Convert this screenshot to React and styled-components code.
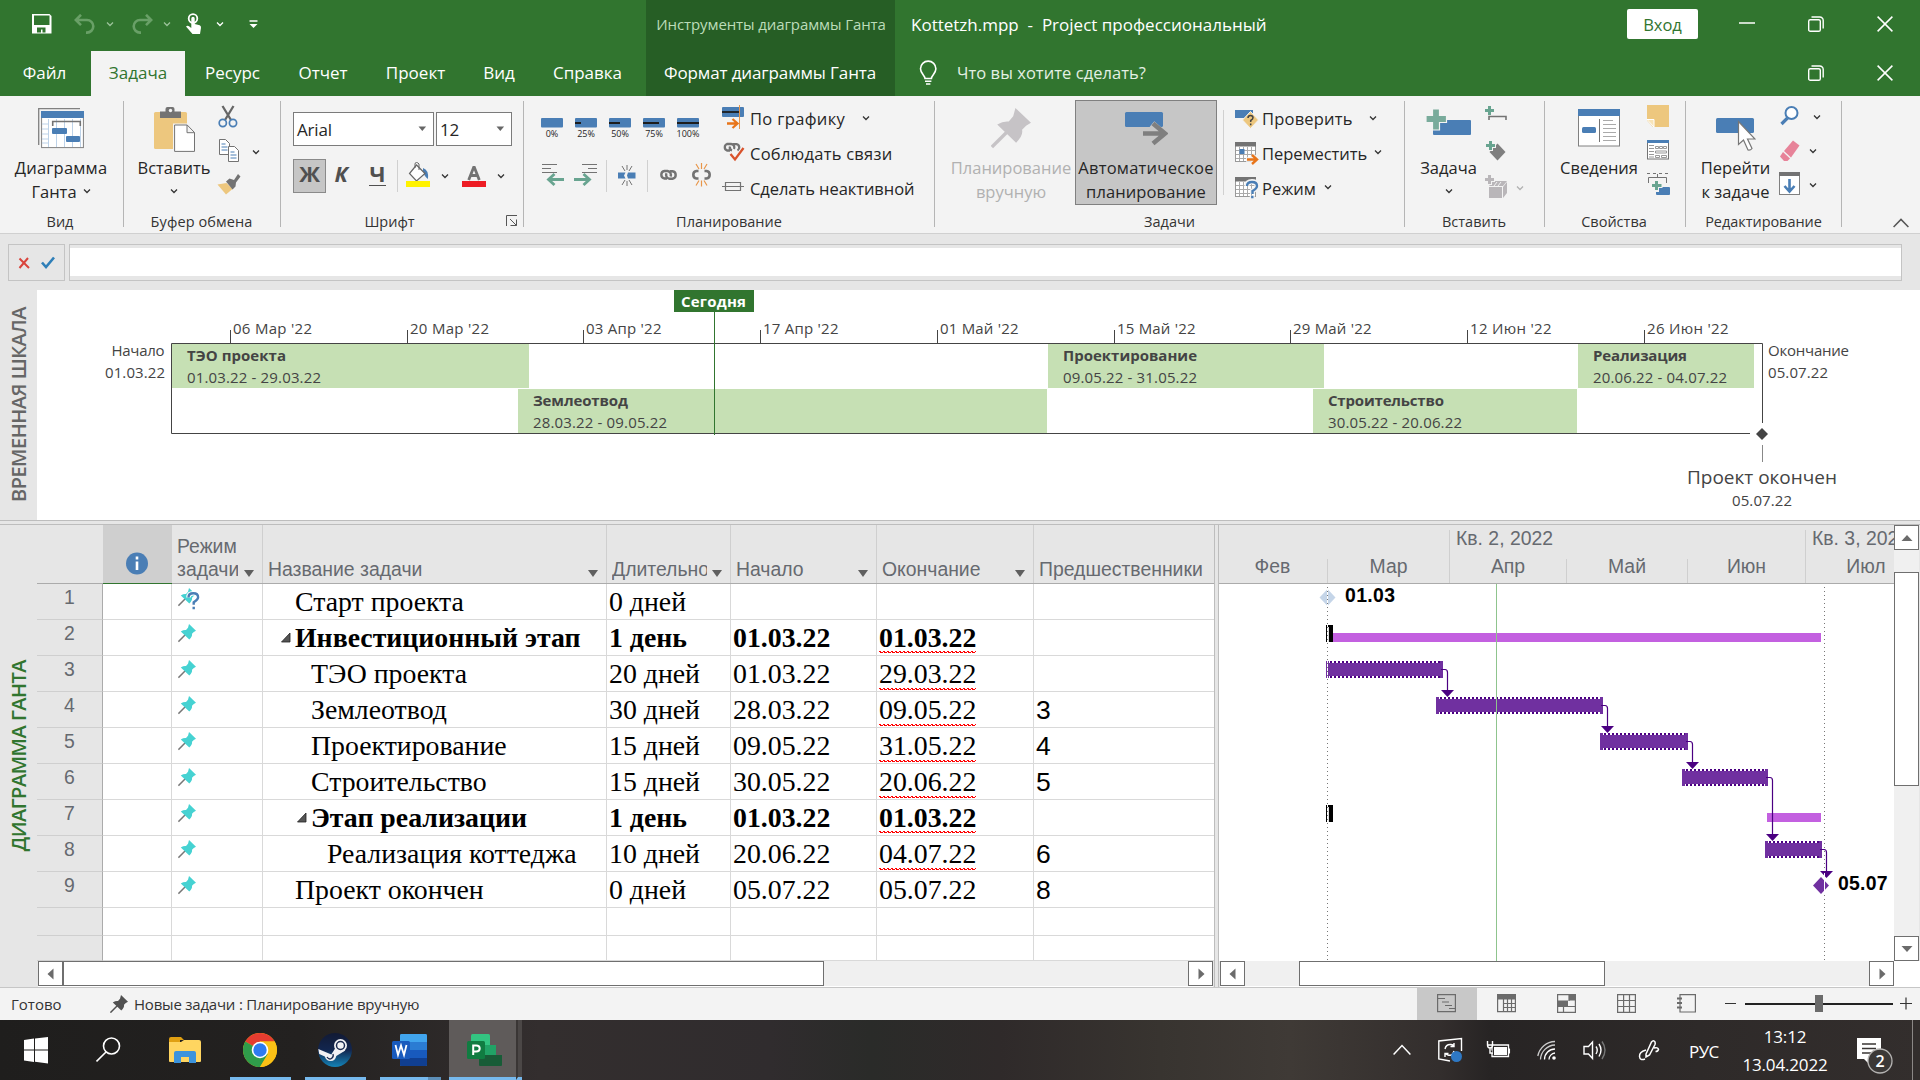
import React from "react";
import styled, { createGlobalStyle } from "styled-components";

const GREEN = "#31752f";
const BLUE = "#4a7eb5";
const GREY = "#737373";
const UI = `"Open Sans", "Noto Sans", sans-serif`;
const ARIAL = `"Liberation Sans", Arial, sans-serif`;
const TIMES = `"Liberation Serif", "Times New Roman", serif`;

const Global = createGlobalStyle`
  * { box-sizing: border-box; }
  body { margin: 0; background: #e6e6e6; font-family: ${UI}; overflow: hidden; }
`;

const Screen = styled.div`
  width: 1920px;
  height: 1080px;
  display: flex;
  flex-direction: column;
  color: #262626;
  font-family: ${UI};
  white-space: nowrap;
  overflow: hidden;
`;

const Drawing = styled.svg`
  display: block;
  flex: none;
`;

const Icon = ({ w, h, children, ...rest }) => (
  <Drawing width={w} height={h} viewBox={`0 0 ${w} ${h}`} fill="none" {...rest}>
    {children}
  </Drawing>
);

const Gap = styled.div`
  flex: none;
  width: ${(p) => p.$w || 0}px;
  height: ${(p) => p.$h || 0}px;
`;

const Chevron = ({ color = "#333", h = 35, y }) => (
  <Icon w={8} h={h}>
    <path d={`M1 ${(y ?? h / 2) - 1.5}l3 3l3-3`} stroke={color} strokeWidth="1.3" />
  </Icon>
);

/* ---------- title bar and tabs ---------- */

const Header = styled.header`
  flex: none;
  height: 96px;
  display: flex;
  background: ${GREEN};
  color: #fff;
`;
const HeaderPart = styled.div`
  flex: none;
  width: ${(p) => p.$w}px;
  background: ${(p) => (p.$dark ? "#265e25" : "transparent")};
  display: flex;
  flex-direction: column;
`;
const TitleRow = styled.div`
  height: 51px;
  display: flex;
  align-items: center;
  padding-left: ${(p) => p.$pad || 0}px;
  padding-bottom: 3px;
`;
const TabRow = styled.nav`
  height: 45px;
  display: flex;
  align-items: center;
  padding-left: ${(p) => p.$pad || 0}px;
  padding-bottom: ${(p) => p.$lift || 0}px;
`;
const Tab = styled.div`
  width: ${(p) => p.$w}px;
  height: 45px;
  line-height: 44px;
  text-align: center;
  font-size: 17px;
  letter-spacing: ${(p) => p.$ls || 0}px;
  background: ${(p) => (p.$active ? "#f3f3f3" : "transparent")};
  color: ${(p) => (p.$active ? GREEN : "#fff")};
`;
const FileTab = styled(Tab)`
  padding-right: 2px;
`;
const ContextTitle = styled.div`
  width: 100%;
  padding-left: 1px;
  text-align: center;
  font-size: 15px;
  letter-spacing: -0.1px;
  color: #bcdcb9;
`;
const WindowTitle = styled.div`
  font-size: 17px;
  white-space: pre;
  width: 716px;
`;
const SignIn = styled.button`
  width: 71px;
  height: 30px;
  border: 0;
  border-radius: 2px;
  padding: 0;
  background: #fff;
  color: ${GREEN};
  font: 16.5px ${UI};
`;
const Ask = styled.div`
  width: 851px;
  font-size: 16.5px;
  letter-spacing: 0.05px;
  color: #e4f0e3;
`;

const Restore = () => (
  <Icon w={16} h={16} stroke="#fff" strokeWidth="1.4">
    <rect x="0.7" y="3.7" width="11.6" height="11.6" rx="1.6" />
    <path d="M3.5 1h8.3a3.4 3.4 0 0 1 3.4 3.4v8" />
  </Icon>
);
const Close = () => (
  <Icon w={16} h={16} stroke="#fff" strokeWidth="1.5">
    <path d="M.6.6l14.8 14.8M15.4.6L.6 15.4" />
  </Icon>
);

const QuickAccess = () => (
  <>
    <Icon w={20} h={20}>
      <path d="M0 0h17.5l2 2v17.5H0z" fill="#fff" />
      <path d="M2 1.5h15.500v9.500H2z" fill={GREEN} />
      <path d="M5 13.500h8.500v5H10.500v-3h-1.500v3H5z" fill={GREEN} />
    </Icon>
    <Gap $w={22} />
    <Icon w={22} h={20} stroke="#69a067" strokeWidth="2.600">
      <path d="M7 .8L1.800 6L7 11.200M2 6h11a6.300 6.300 0 0 1 0 12.600h-1" />
    </Icon>
    <Gap $w={10} />
    <Chevron color="#9cc39a" h={12} />
    <Gap $w={17} />
    <Icon w={22} h={20} stroke="#69a067" strokeWidth="2.600">
      <path d="M15 .8L20.200 6L15 11.200M20 6H9a6.300 6.300 0 0 0 0 12.600h1" />
    </Icon>
    <Gap $w={10} />
    <Chevron color="#9cc39a" h={12} />
    <Gap $w={14} />
    <Icon w={17} h={22}>
      <circle cx="8" cy="5.500" r="4.300" stroke="#fff" strokeWidth="1.800" />
      <path d="M6.300 5.500a1.700 1.700 0 0 1 3.400 0v5.500l5 1.300q1.500.5 1.300 2.500L15 21H7.500L1 13.500q1.500-1.500 3-.3l2.300 1.700z" fill="#fff" />
    </Icon>
    <Gap $w={14} />
    <Chevron color="#fff" h={12} />
    <Gap $w={25} />
    <Icon w={9} h={9}>
      <path d="M.5 1h8" stroke="#fff" strokeWidth="1.500" />
      <path d="M.5 4h8l-4 4z" fill="#fff" />
    </Icon>
  </>
);

const Top = () => (
  <Header>
    <HeaderPart $w={646}>
      <TitleRow $pad={32}>
        <QuickAccess />
      </TitleRow>
      <TabRow>
        <FileTab $w={91}>Файл</FileTab>
        <Tab $w={94} $active>Задача</Tab>
        <Tab $w={95}>Ресурс</Tab>
        <Tab $w={86}>Отчет</Tab>
        <Tab $w={99}>Проект</Tab>
        <Tab $w={68}>Вид</Tab>
        <Tab $w={109}>Справка</Tab>
      </TabRow>
    </HeaderPart>
    <HeaderPart $w={249} $dark>
      <TitleRow>
        <ContextTitle>Инструменты диаграммы Ганта</ContextTitle>
      </TitleRow>
      <TabRow>
        <Tab $w={248} $ls={-0.12}>Формат диаграммы Ганта</Tab>
      </TabRow>
    </HeaderPart>
    <HeaderPart $w={1025}>
      <TitleRow $pad={16}>
        <WindowTitle>{"Kottetzh.mpp  -  Project профессиональный"}</WindowTitle>
        <SignIn>Вход</SignIn>
        <Gap $w={41} />
        <Icon w={16} h={4}>
          <path d="M0 1h16" stroke="#fff" strokeWidth="1.500" />
        </Icon>
        <Gap $w={53} />
        <Restore />
        <Gap $w={53} />
        <Close />
      </TitleRow>
      <TabRow $pad={24} $lift={2}>
        <Icon w={20} h={26} stroke="#fff" strokeWidth="1.600">
          <path d="M6 18.500c0-3-4.500-5-4.500-9.700a7.700 7.700 0 0 1 15.400 0c0 4.700-4.500 6.700-4.500 9.700zM6 21.300h6.400M7 24h4.400" />
        </Icon>
        <Gap $w={18} />
        <Ask>Что вы хотите сделать?</Ask>
        <Restore />
        <Gap $w={53} />
        <Close />
      </TabRow>
    </HeaderPart>
  </Header>
);

/* ---------- ribbon ---------- */

const RibbonBar = styled.section`
  flex: none;
  height: 138px;
  display: flex;
  padding-top: 5px;
  background: #f3f3f3;
  border-bottom: 1px solid #d0d0d0;
`;
const GroupBox = styled.div`
  flex: none;
  width: ${(p) => p.$w}px;
  height: 126px;
  border-right: 1px solid #b5b5b5;
`;
const GroupBody = styled.div`
  height: 112px;
  display: flex;
  align-items: flex-start;
  padding-left: ${(p) => p.$pad || 0}px;
`;
const GroupName = styled.div`
  display: flex;
  justify-content: center;
  align-items: center;
  height: 16px;
  padding-right: ${(p) => p.$shift || 0}px;
  font-size: 14.5px;
  letter-spacing: ${(p) => p.$ls || 0}px;
  color: #333;
`;
const Big = styled.div`
  flex: none;
  width: ${(p) => p.$w}px;
  height: 105px;
  margin-top: -1px;
  padding-top: ${(p) => (p.$on ? 0 : 1)}px;
  display: flex;
  flex-direction: column;
  align-items: center;
  background: ${(p) => (p.$on ? "#c6c6c6" : "transparent")};
  border: ${(p) => (p.$on ? "1px solid #808080" : "0")};
  color: ${(p) => (p.$off ? "#b1b1b1" : "#262626")};
`;
const BigLine = styled.div`
  height: 24px;
  line-height: 24px;
  display: flex;
  align-items: center;
  gap: 6px;
  font-size: 16.5px;
  letter-spacing: ${(p) => p.$ls || 0}px;
`;
const Column = styled.div`
  flex: none;
  display: flex;
  flex-direction: column;
`;
const Line = styled.div`
  height: 35px;
  display: flex;
  align-items: center;
  font-size: 16.5px;
  letter-spacing: ${(p) => p.$ls || 0}px;
`;
const Rule = styled.div`
  flex: none;
  width: 1px;
  height: ${(p) => p.$h}px;
  margin-top: ${(p) => p.$top || 0}px;
  background: #d0d0d0;
`;
const Combo = styled.div`
  width: ${(p) => p.$w}px;
  height: 34px;
  border: 1px solid #7b7b7b;
  background: #fff;
  display: flex;
  align-items: center;
  justify-content: space-between;
  padding: 0 6px 0 3px;
  font-size: 17px;
  letter-spacing: -0.2px;
`;
const Letter = styled.div`
  flex: none;
  width: 33px;
  height: 34px;
  line-height: 27px;
  padding-right: ${(p) => p.$shift || 0}px;
  text-align: center;
  font-size: 22px;
  font-weight: 700;
  font-style: ${(p) => (p.$italic ? "italic" : "normal")};
  color: #505050;
  background: ${(p) => (p.$on ? "#c6c6c6" : "transparent")};
  border: 1px solid ${(p) => (p.$on ? "#8a8a8a" : "transparent")};
`;
const Underlined = styled.span`
  display: inline-block;
  height: 26px;
  border-bottom: 1.5px solid #505050;
`;
const FontRow = styled.div`
  display: flex;
  align-items: flex-start;
  margin-top: ${(p) => p.$top}px;
`;
const PercentRow = styled.div`
  display: flex;
  gap: 8px;
  margin-top: 17px;
  height: 42px;
`;
const Percent = styled.div`
  width: 26px;
  display: flex;
  flex-direction: column;
  align-items: center;
  font-size: 9px;
  line-height: 11px;
`;

const Group = ({ w, pad, name, shift, ls, children }) => (
  <GroupBox $w={w}>
    <GroupBody $pad={pad}>{children}</GroupBody>
    <GroupName $shift={shift} $ls={ls}>{name}</GroupName>
  </GroupBox>
);

const PinShape = ({ color, needle = color }) => (
  <>
    <path d="M.4 17.600L8 10" stroke={needle} strokeWidth="1.500" />
    <path d="M11 0L18 6.700L15.800 8L14 9.800Q14.600 12.500 11.300 15.600L2.800 7.400Q5.500 5.800 8 6.100L10 3.700Z" fill={color} />
  </>
);

const Triangle = ({ color = "#666" }) => (
  <Icon w={9} h={6}>
    <path d="M.5 .5h7.600l-3.800 4.500z" fill={color} />
  </Icon>
);

const ViewGroup = () => (
  <Group w={124} name="Вид" shift={3}>
    <Big $w={122}>
      <Icon w={46} h={55}>
        <path d="M.7 44V7.700H42" stroke="#808080" strokeWidth="1.300" />
        <rect x="3.600" y="10.600" width="41.800" height="36" fill="#fff" stroke="#808080" />
        <rect x="3" y="10" width="43" height="7" fill={BLUE} />
        <path d="M10.500 18v28M18.500 18v28M26.500 18v28M34.500 18v28M42.500 18v28M4 23h6M4 28h6M4 33h6M4 38h6M4 42h6" stroke="#bdd2e8" />
        <path d="M14.700 25v-4.500H42.300V25" stroke={GREY} strokeWidth="1.600" />
        <rect x="14" y="27" width="15" height="6" rx="1" fill={BLUE} />
        <rect x="28" y="35" width="14" height="6" rx="1" fill={BLUE} />
      </Icon>
      <BigLine $ls={0.2}>Диаграмма</BigLine>
      <BigLine>Ганта <Chevron h={24} y={11} /></BigLine>
    </Big>
  </Group>
);

const ClipboardGroup = () => (
  <Group w={157} pad={8} name="Буфер обмена" ls={0.1} shift={1}>
    <Big $w={84}>
      <Icon w={42} h={55}>
        <rect x="1" y="11" width="33" height="37" rx="1.500" fill="#edc77e" />
        <path d="M7 10.500h5.500V8q0-2 2-2h5q2 0 2 2v2.500H28V17H7z" fill="#737373" />
        <circle cx="17.500" cy="9.500" r="1.700" fill="#f3f3f3" />
        <path d="M20 22.500h15l7 7.500v22H20z" fill="#f3f3f3" />
        <path d="M21.600 24h12.600l7.300 7.500V50.400H21.600zM34 24v7.700h7.500" fill="#fff" stroke="#737373" />
      </Icon>
      <BigLine>Вставить</BigLine>
      <BigLine><Chevron h={24} y={11} /></BigLine>
    </Big>
    <Column>
      <Line>
        <Icon w={24} h={35}>
          <path d="M6.500 5L15 19M17.500 5L9 19" stroke="#666" strokeWidth="2.300" />
          <circle cx="6.800" cy="22" r="3.600" stroke={BLUE} strokeWidth="1.700" />
          <circle cx="17" cy="22" r="3.600" stroke={BLUE} strokeWidth="1.700" />
        </Icon>
      </Line>
      <Line>
        <Icon w={26} h={35}>
          <path d="M3.500 3.500h6l4 4v11H3.500z" fill="#fff" stroke="#737373" />
          <path d="M5.500 8h4M5.500 11h6M5.500 14h6" stroke={BLUE} />
          <path d="M12.500 10.500h6l4 4v11H12.500z" fill="#fff" stroke="#737373" />
          <path d="M14.500 16h4M14.500 19h6M14.500 22h6" stroke={BLUE} />
        </Icon>
        <Gap $w={10} />
        <Chevron y={16} />
      </Line>
      <Line>
        <Icon w={26} h={35}>
          <path d="M1.500 13.500l9-1.500 6 6-6.500 5.500z" fill="#edc77e" />
          <path d="M10 10.500l3.500-3 4.500 1.500 4-6 2.500 2.500-4.500 6-.5 4-3 3z" fill="#737373" />
        </Icon>
      </Line>
    </Column>
  </Group>
);

const FontGroup = () => (
  <Group w={243} pad={12} name="Шрифт" shift={25}>
    <Column>
      <FontRow $top={11}>
        <Combo $w={141}>Arial<Triangle /></Combo>
        <Gap $w={2} />
        <Combo $w={76}>12<Triangle /></Combo>
      </FontRow>
      <FontRow $top={13}>
        <Letter $on>Ж</Letter>
        <Letter $italic $shift={3}>К</Letter>
        <Gap $w={3} />
        <Letter $shift={2}><Underlined>Ч</Underlined></Letter>
        <Gap $w={2} />
        <Rule $h={32} $top={1} />
        <Gap $w={8} />
        <Icon w={25} h={34}>
          <path d="M17 9q6 2 5 11-4-3-5-8z" fill={BLUE} />
          <path d="M10.500 6L19 14.500L10.500 22L3.500 14.500z" fill="#fff" stroke="#666" strokeWidth="1.200" />
          <path d="M9 9V5q0-1.500 1.500-1.500T13 5v6" stroke="#666" />
          <rect y="22" width="24" height="6" fill="#fff200" />
        </Icon>
        <Gap $w={10} />
        <Chevron h={34} y={17} />
        <Gap $w={13} />
        <Icon w={24} h={34}>
          <path d="M12 7.500L6.700 21M12 7.500L17.300 21M8 16.500h8" stroke="#737373" strokeWidth="2.800" />
          <rect y="22" width="24" height="6" fill="#ed1c24" />
        </Icon>
        <Gap $w={11} />
        <Chevron h={34} y={17} />
        <Gap $w={1} />
        <Column>
          <Gap $h={56} />
          <Icon w={12} h={12} stroke="#555">
            <path d="M.5 11V.500H11M4 4l6.500 6.500M10.500 4.500v6H4.500" />
          </Icon>
        </Column>
      </FontRow>
    </Column>
  </Group>
);

const percents = [0, 6, 11, 16, 22];

const ScheduleGroup = () => (
  <Group w={411} pad={15} name="Планирование">
    <Column>
      <PercentRow>
        {percents.map((n, i) => (
          <Percent key={i}>
            <Icon w={22} h={10}>
              <rect width="22" height="9.500" rx="1" fill={BLUE} />
              <path d={`M0 5h${n}`} stroke="#1d1d1d" strokeWidth="2" />
            </Icon>
            {i * 25}%
          </Percent>
        ))}
      </PercentRow>
      <FontRow $top={0}>
        <Gap $w={3} />
        <Icon w={23} h={32}>
          <path d="M0 4.500h15M0 8.500h9M0 12.500h15" stroke="#737373" />
          <path d="M22 19.500H7M12.500 14L6.500 19.500L12.500 25" stroke="#68a490" strokeWidth="2.800" />
        </Icon>
        <Gap $w={9} />
        <Icon w={24} h={32}>
          <path d="M8 4.500h15M14 8.500h9M8 12.500h15" stroke="#737373" />
          <path d="M0 19.500h15M9.500 14L15.500 19.500L9.500 25" stroke="#68a490" strokeWidth="2.800" />
        </Icon>
        <Gap $w={8} />
        <Rule $h={32} />
        <Gap $w={11} />
        <Icon w={18} h={32}>
          <path d="M4 6l3 5M9 5v5M14 6l-3 5M4 25l3-5M9 26v-5M14 25l-3-5" stroke="#737373" />
          <path d="M0 12.500h7.500l-1.500 3 1.500 3H0zM17.500 12.500H10l-1 3 1 3h7.500z" fill={BLUE} />
        </Icon>
        <Gap $w={11} />
        <Rule $h={32} />
        <Gap $w={11} />
        <Icon w={19} h={32} stroke="#737373" strokeWidth="2.400">
          <path d="M8 18.500H5.500a3.800 3.800 0 0 1 0-7.500h3a3.800 3.800 0 0 1 3 5.500M11 11.200H13.500a3.800 3.800 0 0 1 0 7.500h-3a3.800 3.800 0 0 1-3-5.500" />
        </Icon>
        <Gap $w={13} />
        <Icon w={22} h={32}>
          <path d="M7.500 18.500H5.500a3.800 3.800 0 0 1 0-7.500h2M13.500 11h2a3.800 3.800 0 0 1 0 7.500h-2" stroke="#737373" strokeWidth="2.600" />
          <path d="M10.500 3v6M5 4l3 5M16 4l-3 5M10.500 20.500v6M5 25.500l3-5M16 25.500l-3-5" stroke="#e8964a" strokeWidth="1.200" />
        </Icon>
      </FontRow>
    </Column>
    <Gap $w={9} />
    <Column>
      <Line $ls={0.35}>
        <Icon w={24} h={35}>
          <rect y="6" width="22" height="10" rx="1" fill={BLUE} />
          <path d="M0 11h18" stroke="#1d1d1d" strokeWidth="1.800" />
          <path d="M17.500 4v24" stroke="#e8964a" />
          <path d="M5 22.500h9M10.500 18l5 4.500-5 4.500" stroke="#e8751a" strokeWidth="2.300" />
        </Icon>
        <Gap $w={4} />По графику<Gap $w={17} />
        <Chevron y={17} />
      </Line>
      <Line $ls={0.25}>
        <Icon w={24} h={35}>
          <path d="M8 14.500H5a3.500 3.500 0 0 1 0-6.500h4a3.500 3.500 0 0 1 3 5M11 8.200h3.500a3.400 3.400 0 0 1 1 6.300M10 14.500q-3-1-2-4" stroke="#737373" strokeWidth="2.300" />
          <path d="M8.500 18l4.500 5.500L21.500 12" stroke="#f3f3f3" strokeWidth="4.500" />
          <path d="M8.500 18l4.500 5.500L21.500 12" stroke="#d9532c" strokeWidth="2.300" />
        </Icon>
        <Gap $w={4} />Соблюдать связи
      </Line>
      <Line $ls={-0.06}>
        <Icon w={24} h={35} stroke="#737373" strokeWidth="1.200">
          <path d="M0 15.500h22M3.500 11.500h15v8H3.500z" />
        </Icon>
        <Gap $w={4} />Сделать неактивной
      </Line>
    </Column>
  </Group>
);

const CalendarBase = () => (
  <>
    <rect x=".5" y="4.500" width="20" height="17" fill="#fff" stroke="#999" />
    <path d="M4.500 7v14M8.500 7v14M12.500 7v14M16.500 7v14M1 10.500h19M1 14.500h19M1 18.500h19" stroke="#aaa" />
    <rect y="2" width="21" height="4.500" fill="#737373" />
  </>
);

const TasksGroup = () => (
  <Group w={470} pad={12} name="Задачи">
    <Big $w={128} $off>
      <Icon w={40} h={55}>
        <g transform="translate(0 7) scale(2.22)">
          <PinShape color="#c6c3c6" />
        </g>
      </Icon>
      <BigLine>Планирование</BigLine>
      <BigLine>вручную</BigLine>
    </Big>
    <Big $w={142} $on>
      <Icon w={44} h={55}>
        <rect x="1" y="11" width="38" height="15" rx="1.500" fill={BLUE} />
        <path d="M18 32.500h20M28 23l11 9.500-11 9.500" stroke="#c6c6c6" strokeWidth="7" />
        <path d="M19 32.500h20M29 22.500l12 10-12 10" stroke="#7f7f7f" strokeWidth="4.600" />
      </Icon>
      <BigLine $ls={0.25}>Автоматическое</BigLine>
      <BigLine $ls={0.1}>планирование</BigLine>
    </Big>
    <Gap $w={6} />
    <Rule $h={85} $top={9} />
    <Gap $w={11} />
    <Column>
      <Line $ls={0.2}>
        <Icon w={24} h={35}>
          <rect y="9" width="18" height="8" fill={BLUE} />
          <path d="M15.500 10.500l8 8.500-8 8.500-8-8.500z" fill="#edc77e" stroke="#f3f3f3" />
          <path d="M13 17q0-2.500 2.500-2.500T18 16.800q0 1.500-2.300 2.700v1.500M15.700 22.500v1.800" stroke="#444" strokeWidth="1.500" />
        </Icon>
        <Gap $w={3} />Проверить<Gap $w={16} />
        <Chevron y={17} />
      </Line>
      <Line $ls={-0.05}>
        <Icon w={24} h={35}>
          <g transform="translate(0 4)"><CalendarBase /></g>
          <rect x="4.500" y="13" width="5" height="5" fill={BLUE} />
          <path d="M11 23.500h9M17 19l5 4.500-5 4.500" stroke="#f3f3f3" strokeWidth="4.500" />
          <path d="M12 23.500h9M17 19l5 4.500-5 4.500" stroke="#e8751a" strokeWidth="2.400" />
        </Icon>
        <Gap $w={3} />Переместить<Gap $w={7} />
        <Chevron y={16} />
      </Line>
      <Line>
        <Icon w={24} h={35}>
          <g transform="translate(0 4)"><CalendarBase /></g>
          <path d="M12 15q0-4.500 5-4.500t5 4.500q0 2.500-4.500 5v3M17.300 24.500v2.500" stroke="#f3f3f3" strokeWidth="5" />
          <path d="M12 15q0-4 5-4t5 4q0 2.500-4.500 5v3M17.300 24.800v2.500" stroke={BLUE} strokeWidth="2.400" />
        </Icon>
        <Gap $w={3} />Режим<Gap $w={8} />
        <Chevron y={16} />
      </Line>
    </Column>
  </Group>
);

const InsertGroup = () => (
  <Group w={140} pad={7} name="Вставить" shift={1}>
    <Big $w={73}>
      <Icon w={46} h={55}>
        <rect x="7" y="19" width="38" height="15" rx="1" fill={BLUE} />
        <path d="M6.500 8h7v6.500h7v7h-7v7.500h-7v-7.500H0v-7h6.500z" fill="#79ab9b" stroke="#f3f3f3" strokeWidth="1.200" />
      </Icon>
      <BigLine>Задача</BigLine>
      <BigLine><Chevron h={24} y={11} /></BigLine>
    </Big>
    <Column>
      <Line>
        <Icon w={24} h={35}>
          <path d="M4 19v-3.500h17V19" stroke="#737373" strokeWidth="1.600" />
          <path d="M4.500 5v9M0 9.500h9" stroke="#68a490" strokeWidth="3" />
        </Icon>
      </Line>
      <Line>
        <Icon w={24} h={35}>
          <path d="M12.500 7.500l8 8.500-8 8.500-8-8.500z" fill="#7f7f7f" />
          <path d="M5.500 4v11M0 9.500h11" stroke="#f3f3f3" strokeWidth="5" />
          <path d="M5.500 5v9M1 9.500h9" stroke="#68a490" strokeWidth="3" />
        </Icon>
      </Line>
      <Line>
        <Icon w={24} h={35}>
          <path d="M4 16h13v11H4zM4 15l4-5h14l-4 5zM18 16l4-5v11l-4 5z" fill="#b9b6b9" />
          <path d="M9 15l3-4M13 15l3-4" stroke="#f3f3f3" />
          <path d="M4.500 3v11M-1 8.500h11" stroke="#f3f3f3" strokeWidth="5" />
          <path d="M4.500 4v9M0 8.500h9" stroke="#b9b6b9" strokeWidth="3" />
        </Icon>
        <Gap $w={7} />
        <Chevron color="#b1b1b1" y={17} />
      </Line>
    </Column>
  </Group>
);

const PropsGroup = () => (
  <Group w={141} pad={10} name="Свойства" shift={2}>
    <Big $w={88}>
      <Icon w={42} h={55}>
        <rect x=".5" y="8.500" width="41" height="36.500" fill="#fff" stroke="#808080" />
        <rect y="8" width="42" height="7" fill={BLUE} />
        <rect x="4" y="26" width="14" height="6" rx="1.500" fill={BLUE} />
        <path d="M21.500 18v23" stroke={GREY} />
        <path d="M25 19.500h10M25 23.500h13M25 27.500h13M25 31.500h13M25 35.500h13M25 39.500h13" stroke="#aaa" />
      </Icon>
      <BigLine>Сведения</BigLine>
    </Big>
    <Gap $w={1} />
    <Column>
      <Line>
        <Icon w={26} h={35}>
          <path d="M3 4h22v22H9L3 19.500z" fill="#edc77e" />
          <path d="M3 18.500h7V26z" fill="#f8e4b8" stroke="#fff" />
        </Icon>
      </Line>
      <Line>
        <Icon w={26} h={35}>
          <rect x="3.500" y="4.500" width="21" height="18.500" fill="#fff" stroke="#737373" />
          <rect x="3" y="4" width="22" height="3" fill={BLUE} />
          <path d="M5 9.500h5M5 12.500h5M5 15.500h5M5 18.500h5M5 21h5M11.500 10.500h3v2h-3zM15.500 10.500h3v2h-3zM19.500 10.500h3v2h-3zM11.500 15h11v2h-11zM11.500 19.500h4v2h-4zM17.500 19.500h5v2h-5z" stroke="#999" />
        </Icon>
      </Line>
      <Line>
        <Icon w={26} h={35}>
          <path d="M3 2.500h3M9 2.500h3M15 2.500h3M21 2.500h3M4.500 12V6.500h18V12M13.500 6V3" stroke="#737373" />
          <rect x="12" y="16" width="14" height="8" rx="1" fill={BLUE} />
          <path d="M12.500 9v12M6.500 14.500h12" stroke="#f3f3f3" strokeWidth="5" />
          <path d="M12.500 10v9M8 14.500h9.500" stroke="#68a490" strokeWidth="3" />
        </Icon>
      </Line>
    </Column>
  </Group>
);

const EditGroup = () => (
  <Group w={156} pad={11} name="Редактирование" ls={-0.05}>
    <Big $w={77}>
      <Icon w={40} h={55}>
        <rect y="17" width="38" height="15" rx="1.500" fill={BLUE} />
        <path d="M22.500 20.500v23l5-4.500 4.500 10q2.500.5 4-1.500l-4.500-9.500h7.500z" fill="#fff" stroke="#777" strokeWidth="1.200" />
      </Icon>
      <BigLine>Перейти</BigLine>
      <BigLine>к задаче</BigLine>
    </Big>
    <Gap $w={1} />
    <Column>
      <Line>
        <Icon w={26} h={35}>
          <circle cx="16.500" cy="12" r="6" fill="#fff" stroke={BLUE} strokeWidth="2" />
          <path d="M12.500 17L6.500 23" stroke={BLUE} strokeWidth="3.200" />
        </Icon>
        <Gap $w={12} />
        <Chevron y={16} />
      </Line>
      <Line>
        <Icon w={26} h={35}>
          <path d="M18 4.500l6.500 5L16 21.500l-7-6.500z" fill="#e78399" />
          <path d="M8 16l7 6.500-2.500 2.500H9l-4-4.500z" fill="#e78399" />
        </Icon>
        <Gap $w={8} />
        <Chevron y={15} />
      </Line>
      <Line>
        <Icon w={26} h={35}>
          <rect x="4.500" y="1.500" width="20" height="22" fill="#fff" stroke="#808080" />
          <rect x="4" y="1" width="21" height="4" fill="#737373" />
          <path d="M14.500 8v12M9.500 15l5 5.500 5-5.500" stroke={BLUE} strokeWidth="2.600" />
        </Icon>
        <Gap $w={8} />
        <Chevron y={14} />
      </Line>
    </Column>
  </Group>
);

const Collapse = styled.div`
  flex: 1;
  display: flex;
  justify-content: flex-end;
  align-items: flex-end;
  padding: 0 11px 5px 0;
`;

const Ribbon = () => (
  <RibbonBar>
    <ViewGroup />
    <ClipboardGroup />
    <FontGroup />
    <ScheduleGroup />
    <TasksGroup />
    <InsertGroup />
    <PropsGroup />
    <EditGroup />
    <Collapse>
      <Icon w={16} h={10} stroke="#555" strokeWidth="1.500">
        <path d="M.6 9L8 1.400L15.400 9" />
      </Icon>
    </Collapse>
  </RibbonBar>
);

/* ---------- entry bar ---------- */

const Entry = styled.div`
  flex: none;
  height: 56px;
  padding: 10px 18px 9px 8px;
  display: flex;
  gap: 4px;
`;
const EntryButtons = styled.div`
  width: 57px;
  border: 1px solid #c4c4c4;
  display: flex;
  align-items: center;
  justify-content: space-between;
  padding: 0 9px 0 9px;
`;
const EntryField = styled.div`
  flex: 1;
  border: 1px solid #c4c4c4;
  padding: 3px 0 4px;
`;
const EntryInput = styled.div`
  height: 100%;
  background: #fff;
`;

/* ---------- timeline ---------- */

const Side = styled.div`
  flex: none;
  width: 37px;
  display: flex;
  align-items: center;
  justify-content: center;
  font-size: 20px;
  font-weight: 600;
  letter-spacing: ${(p) => p.$ls}px;
  color: ${(p) => p.$color};
`;
const Turned = styled.span`
  writing-mode: vertical-rl;
  transform: rotate(180deg);
  line-height: 37px;
`;
const TimelineRow = styled.section`
  flex: none;
  height: 230px;
  display: flex;
`;
const TimelineChart = styled.svg`
  display: block;
  background: #fff;
  font-family: ${UI};
  font-size: 15px;
`;
const Splitter = styled.div`
  flex: none;
  height: 5px;
  border-top: 1px solid #bdbdbd;
  border-bottom: 1px solid #bdbdbd;
`;

const ticks = [
  ["06 Мар '22", 79], ["20 Мар '22", 79], ["03 Апр '22", 75.5],
  ["17 Апр '22", 75.5], ["01 Май '22", 78.5], ["15 Май '22", 78.5],
  ["29 Май '22", 78.5], ["12 Июн '22", 81.5], ["26 Июн '22", 81.5],
];
const phases = [
  { name: "ТЭО проекта", dates: "01.03.22 - 29.03.22", x: 172, w: 357, y: 344, tw: 99 },
  { name: "Проектирование", dates: "09.05.22 - 31.05.22", x: 1048, w: 276, y: 344, tw: 134 },
  { name: "Реализация", dates: "20.06.22 - 04.07.22", x: 1578, w: 176, y: 344, tw: 94 },
  { name: "Землеотвод", dates: "28.03.22 - 09.05.22", x: 518, w: 529, y: 389, tw: 95 },
  { name: "Строительство", dates: "30.05.22 - 20.06.22", x: 1313, w: 264, y: 389, tw: 116 },
];

const Timeline = () => (
  <TimelineRow>
    <Side $color="#666" $ls={-0.5}><Turned>ВРЕМЕННАЯ ШКАЛА</Turned></Side>
    <TimelineChart width="1883" height="230" viewBox="37 290 1883 230" fill="#444">
      {phases.map((p) => (
        <g key={p.name}>
          <rect x={p.x} y={p.y} width={p.w} height="44" fill="#c6e0b4" />
          <text x={p.x + 15} y={p.y + 17} fontWeight="700" textLength={p.tw}>{p.name}</text>
          <text x={p.x + 15} y={p.y + 38.5} textLength="134">{p.dates}</text>
        </g>
      ))}
      {ticks.map(([t, len], i) => {
        const x = Math.floor(230.3 + i * 176.75) + 0.5;
        return (
          <g key={t}>
            <path d={`M${x} 330v13`} stroke="#444" />
            <text x={x + 2.5} y="334" textLength={len}>{t}</text>
          </g>
        );
      })}
      <path d="M1762.500 423V343.500H171.500v90H1750" stroke="#444" fill="none" />
      <path d="M714.500 312v123" stroke={GREEN} />
      <rect x="674" y="290" width="80" height="22" fill={GREEN} />
      <text x="681" y="307" fill="#fff" fontWeight="700" textLength="65">Сегодня</text>
      <text x="111.500" y="356" textLength="53">Начало</text>
      <text x="105" y="378" textLength="60">01.03.22</text>
      <text x="1768" y="356" textLength="81">Окончание</text>
      <text x="1768" y="378" textLength="60">05.07.22</text>
      <path d="M1762 428l6 6-6 6-6-6z" />
      <path d="M1762.500 445v17" stroke="#888" />
      <text x="1687" y="484" fontSize="19" textLength="150">Проект окончен</text>
      <text x="1732" y="506" textLength="60">05.07.22</text>
    </TimelineChart>
  </TimelineRow>
);

/* ---------- task sheet ---------- */

const Workspace = styled.section`
  flex: none;
  height: 462px;
  display: flex;
`;
const SheetPane = styled.div`
  flex: none;
  width: 1177px;
  display: flex;
  flex-direction: column;
`;
const columns = "66px 69px 91px 344px 124px 146px 157px 180px";
const SheetHead = styled.div`
  display: grid;
  grid-template-columns: ${columns};
  height: 59px;
  border-bottom: 1px solid #ababab;
`;
const HeadCell = styled.div`
  border-right: 1px solid ${(p) => (p.$first ? "transparent" : "#cfcfcf")};
  border-right-width: ${(p) => (p.$last ? 0 : 1)}px;
  background: ${(p) => (p.$picked ? "#cfcfcf" : "transparent")};
  box-shadow: ${(p) => (p.$picked ? `0 1px 0 ${GREEN}` : "none")};
  display: flex;
  align-items: flex-end;
  justify-content: ${(p) => (p.$picked ? "center" : "space-between")};
  padding: 0 ${(p) => (p.$picked ? 0 : 8)}px 2px ${(p) => (p.$picked ? 0 : 5)}px;
  font: 19.4px/23px ${ARIAL};
  color: #666a70;
  overflow: hidden;
`;
const HeadText = styled.div`
  overflow: hidden;
  width: ${(p) => (p.$w ? `${p.$w}px` : "auto")};
`;
const HeadArrow = styled.div`
  width: 0;
  height: 0;
  margin-bottom: 4px;
  border: 5.500px solid transparent;
  border-top: 7px solid #5f5f5f;
  border-bottom: 0;
`;
const SheetRow = styled.div`
  flex: none;
  display: grid;
  grid-template-columns: ${columns};
  height: ${(p) => p.$h || 36}px;
  font-family: ${TIMES};
  font-size: 27.800px;
  font-weight: ${(p) => (p.$bold ? 700 : 400)};
  line-height: 35px;
  color: #000;
`;
const Cell = styled.div`
  background: #fff;
  border-right: 1px solid #d9d9d9;
  border-bottom: 1px solid #d9d9d9;
  border-right-width: ${(p) => (p.$last ? 0 : 1)}px;
  padding-left: ${(p) => p.$pad ?? 2}px;
  display: flex;
  align-items: flex-start;
  height: 100%;
  overflow: hidden;
`;
const IdCell = styled(Cell)`
  background: #e6e6e6;
  border-right-color: #ababab;
  border-bottom-color: #cfcfcf;
  justify-content: center;
  padding-left: 0;
  font: 19.400px/27px ${ARIAL};
  color: #666a70;
`;
const PredCell = styled(Cell)`
  font-family: ${ARIAL};
  font-size: 26.500px;
  line-height: 36px;
`;
const Flagged = styled.span`
  position: relative;
  &::after {
    content: "";
    position: absolute;
    left: 0;
    right: 0;
    top: ${(p) => (p.$bold ? 31 : 32)}px;
    height: 2px;
    background: repeating-linear-gradient(90deg, #f00 0 2px, transparent 2px 4px) 0 0 / 100% 1px no-repeat,
      repeating-linear-gradient(90deg, transparent 0 1px, #f00 1px 4px) 0 1px / 100% 1px no-repeat;
  }
`;

const tasks = [
  { name: "Старт проекта", level: 0, dur: "0 дней", ask: true },
  { name: "Инвестиционный этап", level: 0, dur: "1 день", start: "01.03.22", end: "01.03.22", bold: true },
  { name: "ТЭО проекта", level: 1, dur: "20 дней", start: "01.03.22", end: "29.03.22" },
  { name: "Землеотвод", level: 1, dur: "30 дней", start: "28.03.22", end: "09.05.22", pred: "3" },
  { name: "Проектирование", level: 1, dur: "15 дней", start: "09.05.22", end: "31.05.22", pred: "4" },
  { name: "Строительство", level: 1, dur: "15 дней", start: "30.05.22", end: "20.06.22", pred: "5" },
  { name: "Этап реализации", level: 1, dur: "1 день", start: "01.03.22", end: "01.03.22", bold: true },
  { name: "Реализация коттеджа", level: 2, dur: "10 дней", start: "20.06.22", end: "04.07.22", pred: "6" },
  { name: "Проект окончен", level: 0, dur: "0 дней", start: "05.07.22", end: "05.07.22", pred: "8", ok: true },
];

const ModeIcon = ({ ask }) => (
  <Icon w={24} h={30}>
    <g transform="translate(0 4)"><PinShape color="#46d2d2" needle="#777" /></g>
    {ask && (
      <>
        <path d="M10.500 13.500q0-4.200 4.800-4.200t4.800 4q0 2.200-4.400 5v2.500M15.700 22.500v2.500" stroke="#fff" strokeWidth="4.500" />
        <path d="M10.500 13.500q0-4.200 4.800-4.200t4.800 4q0 2.200-4.400 5v2.500M15.700 22.800v2.400" stroke={BLUE} strokeWidth="2.400" />
      </>
    )}
  </Icon>
);

const Row = ({ task, n }) => (
  <SheetRow $bold={task.bold}>
    <IdCell>{n}</IdCell>
    <Cell />
    <Cell $pad={6}><ModeIcon ask={task.ask} /></Cell>
    <Cell $pad={task.bold ? 18 + task.level * 16 : 32 + task.level * 16}>
      {task.bold && (
        <Icon w={14} h={36}>
          <path d="M9 13v9H.5z" fill="#555" stroke="#222" strokeWidth=".8" />
        </Icon>
      )}
      {task.name}
    </Cell>
    <Cell>{task.dur}</Cell>
    <Cell>{task.start}</Cell>
    <Cell>{task.end && (task.ok ? task.end : <Flagged $bold={task.bold}>{task.end}</Flagged>)}</Cell>
    <PredCell $last>{task.pred}</PredCell>
  </SheetRow>
);

const BlankRow = ({ h }) => (
  <SheetRow $h={h}>
    <IdCell /><Cell /><Cell /><Cell /><Cell /><Cell /><Cell /><Cell $last />
  </SheetRow>
);

/* ---------- scroll bars ---------- */

const ScrollTrack = styled.div`
  flex: none;
  display: flex;
  flex-direction: ${(p) => (p.$v ? "column" : "row")};
  width: ${(p) => (p.$v ? "25px" : "auto")};
  height: ${(p) => (p.$v ? "436px" : "26px")};
  background: #f0f0f0;
  border-bottom: ${(p) => (p.$v ? 0 : 1)}px solid #fff;
  margin-left: ${(p) => p.$left || 0}px;
  margin-right: ${(p) => p.$right || 0}px;
`;
const ScrollButton = styled.div`
  flex: none;
  width: 25px;
  height: 25px;
  background: #fff;
  border: 1px solid #6f6f6f;
  display: flex;
  align-items: center;
  justify-content: center;
`;
const Thumb = styled.div`
  flex: none;
  width: ${(p) => p.$w}px;
  height: ${(p) => p.$h}px;
  background: #fff;
  border: 1px solid #6f6f6f;
`;
const Fill = styled.div`
  flex: 1;
`;
const arrows = {
  left: "M8.500 .5v11L2.500 6z",
  right: "M3.500 .5v11l6-5.500z",
  up: "M.5 9h11L6 3z",
  down: "M.5 3h11L6 9z",
};
const Arrow = ({ dir }) => (
  <ScrollButton>
    <Icon w={12} h={12}><path d={arrows[dir]} fill="#6b6b6b" /></Icon>
  </ScrollButton>
);

const Sheet = () => (
  <SheetPane>
    <SheetHead>
      <HeadCell $first />
      <HeadCell $picked>
        <Icon w={24} h={35}>
          <circle cx="12" cy="17.500" r="11" fill={BLUE} />
          <path d="M12 10.500v3M12 15.500v8.500" stroke="#fff" strokeWidth="2.600" />
        </Icon>
      </HeadCell>
      <HeadCell><HeadText $w={61}>Режим<br />задачи</HeadText><HeadArrow /></HeadCell>
      <HeadCell><HeadText>Название задачи</HeadText><HeadArrow /></HeadCell>
      <HeadCell><HeadText $w={95}>Длительность</HeadText><HeadArrow /></HeadCell>
      <HeadCell><HeadText>Начало</HeadText><HeadArrow /></HeadCell>
      <HeadCell><HeadText>Окончание</HeadText><HeadArrow /></HeadCell>
      <HeadCell $last><HeadText>Предшественники</HeadText></HeadCell>
    </SheetHead>
    {tasks.map((t, i) => <Row key={t.name} task={t} n={i + 1} />)}
    <BlankRow h={28} />
    <BlankRow h={25} />
    <ScrollTrack $left={1} $right={1}>
      <Arrow dir="left" />
      <Thumb $w={761} $h={25} />
      <Fill />
      <Arrow dir="right" />
    </ScrollTrack>
  </SheetPane>
);

/* ---------- gantt ---------- */

const PaneSplit = styled.div`
  flex: none;
  width: 5px;
  border-left: 1px solid #bdbdbd;
  border-right: 1px solid #bdbdbd;
`;
const GanttPane = styled.div`
  flex: none;
  width: 675px;
  display: flex;
  flex-direction: column;
`;
const GanttChart = styled.svg`
  display: block;
  flex: none;
  font-family: ${ARIAL};
  font-size: 19.400px;
`;

const months = [["Фев", 1272.5], ["Мар", 1388.5], ["Апр", 1508], ["Май", 1627], ["Июн", 1746.5], ["Июл", 1866]];
const bars = [
  [1326, 661, 117],
  [1436, 697, 167],
  [1600, 733, 88],
  [1682, 769, 86],
  [1765, 841, 57],
];
const links = [
  [1443, 669, 697],
  [1603, 705, 733],
  [1688, 741, 769],
  [1768, 777, 841],
  [1822, 849, 878],
];

const Gantt = () => (
  <GanttPane>
    <GanttChart width="675" height="436" viewBox="1219 525 675 436" fill="none">
      <rect x="1219" y="525" width="675" height="58" fill="#e6e6e6" />
      <rect x="1219" y="584" width="675" height="377" fill="#fff" />
      <path d="M1219 583.500h675" stroke="#ababab" />
      <path d="M1449.500 530v53M1805.500 530v53M1327.500 559v24M1566.500 559v24M1687.500 559v24" stroke="#cfcfcf" />
      <g fill="#666a70">
        <text x="1456" y="545">Кв. 2, 2022</text>
        <text x="1812" y="545">Кв. 3, 2022</text>
        {months.map(([m, x]) => (
          <text key={m} x={x} y="572.500" textAnchor="middle">{m}</text>
        ))}
      </g>
      <path d="M1327.500 589l8 8.500-8 8.500-8-8.500z" fill="#c5d5e8" />
      {[[633, 1327, 494], [813, 1767, 54]].map(([y, x, w]) => (
        <rect key={y} x={x} y={y} width={w} height="9" fill="#c360e0" />
      ))}
      {[625, 805].map((y) => (
        <g key={y}>
          <rect x="1326" y={y} width="7" height="17" fill="#000" />
          <path d={`M1328.500 ${y + 2}v15`} stroke="#ddd" />
        </g>
      ))}
      {bars.map(([x, y, w]) => (
        <g key={y}>
          <rect x={x} y={y + 2} width={w} height="13" fill="#7030a0" />
          <path d={`M${x} ${y + 1}h${w}M${x} ${y + 16}h${w}`} stroke="#4b0082" strokeWidth="2" strokeDasharray="2 2" />
          <path d={`M${x + 1.5} ${y}v17M${x + w - 1.5} ${y}v17`} stroke="#7030a0" strokeWidth="3" />
        </g>
      ))}
      <path d="M1327.500 588v373" stroke="#fff" />
      <path d="M1327.500 587v374M1824.500 587v374" stroke="#777" strokeDasharray="1 3" />
      {links.map(([x, y, end]) => (
        <g key={y}>
          <path d={`M${x - 2} ${y + 0.5}h4q2.500 0 2.500 3V${end - 5}`} stroke="#4b0082" strokeWidth="1.200" />
          <path d={`M${x - 2} ${end - 7}h13l-6.500 7z`} fill="#4b0082" />
        </g>
      ))}
      <path d="M1821 877l8 8.500-8 8.500-8-8.500z" fill="#7030a0" />
      <path d="M1824.500 873v21" stroke="#fff" />
      <path d="M1496.500 584v377" stroke="#8fc48d" />
      <g fill="#000" fontWeight="700">
        <text x="1345" y="602" textLength="50">01.03</text>
        <text x="1838" y="890" textLength="49.500">05.07</text>
      </g>
    </GanttChart>
    <ScrollTrack $left={1}>
      <Arrow dir="left" />
      <Gap $w={54} />
      <Thumb $w={306} $h={25} />
      <Fill />
      <Arrow dir="right" />
    </ScrollTrack>
  </GanttPane>
);

const ScrollColumn = styled.div`
  flex: 1;
  background: linear-gradient(#e6e6e6 0 436px, #fff 436px);
`;

/* ---------- status bar ---------- */

const Status = styled.footer`
  flex: none;
  height: 33px;
  border-top: 1px solid #c6c6c6;
  background: #f3f3f3;
  display: flex;
  align-items: center;
  padding-left: 11px;
  font-size: 15px;
  color: #333;
`;
const StatusText = styled.div`
  width: ${(p) => p.$w}px;
  letter-spacing: ${(p) => p.$ls || 0}px;
`;
const ViewButton = styled.div`
  width: 60px;
  height: 32px;
  display: flex;
  align-items: center;
  justify-content: center;
  padding: 0 2px 2px 0;
  background: ${(p) => (p.$on ? "#c8c8c8" : "transparent")};
`;

const StatusBar = () => (
  <Status>
    <StatusText $w={99}>Готово</StatusText>
    <Icon w={18} h={18}><PinShape color="#505050" /></Icon>
    <Gap $w={6} />
    <StatusText $w={1283} $ls={-0.21}>Новые задачи : Планирование вручную</StatusText>
    <ViewButton $on>
      <Icon w={19} h={20} stroke="#6b6b6b" strokeWidth="1.200">
        <path d="M.6 1.600h17.800v17H.6zM1 5.500h7M5 9h7M8 12.500h7M12 15.500h6" />
      </Icon>
    </ViewButton>
    <ViewButton>
      <Icon w={19} h={20} stroke="#6b6b6b" strokeWidth="1.200">
        <path d="M.6 1.600h17.800v17H.6zM6.500 6v12.500M10.500 6v12.500M14.500 6v12.500M7 10.500h11M7 14.500h11" />
        <path d="M0 4h19" strokeWidth="5" />
      </Icon>
    </ViewButton>
    <ViewButton>
      <Icon w={19} h={20}>
        <path d="M.6 1.600h17.800v17.800H.6zM6.500 13v6M12 2v6M0 13.500h19" stroke="#6b6b6b" strokeWidth="1.200" />
        <path d="M12 1h7v6.500h-7zM0 7.500h11v6H0z" fill="#6b6b6b" />
      </Icon>
    </ViewButton>
    <ViewButton>
      <Icon w={19} h={20} stroke="#6b6b6b" strokeWidth="1.200">
        <path d="M.6 1.600h17.800v17.800H.6zM6.600 1.600v18M12.500 1.600v18M.6 7.500h18M.6 13.500h18" />
      </Icon>
    </ViewButton>
    <ViewButton>
      <Icon w={19} h={20} stroke="#6b6b6b" strokeWidth="1.200">
        <path d="M3 1.600h15.400v17.400H3z" />
        <path d="M0 5.500h5M0 10h5M0 14.500h5" strokeWidth="2.200" />
      </Icon>
    </ViewButton>
    <Gap $w={8} />
    <Icon w={190} h={32}>
      <path d="M0 15.500h11M175 15.500h12M181 9.500v12" stroke="#333" strokeWidth="1.200" />
      <path d="M20 16h148" stroke="#222" strokeWidth="2" />
      <rect x="90" y="7" width="8" height="17" fill="#6b6b6b" />
    </Icon>
  </Status>
);

/* ---------- taskbar ---------- */

const Taskbar = styled.div`
  flex: none;
  height: 60px;
  display: flex;
  color: #fff;
  background: linear-gradient(90deg, #1f1e1d 0, #232120 300px, #332e2e 540px, #302c2e 770px, #2a2b29 870px, #2f2a2a 1000px, #383430 1160px, #3f3a36 1290px, #332e2d 1440px, #272424 1490px, #2e2a29 1700px, #332e2d 1920px);
`;
const AppButton = styled.div`
  flex: none;
  width: ${(p) => p.$w}px;
  height: 60px;
  padding-left: ${(p) => p.$pad}px;
  border-bottom: 3px solid #76b9ed;
  background: ${(p) => (p.$on ? "#5f5b5a" : "transparent")};
`;
const Stack = styled.div`
  flex: none;
  width: ${(p) => p.$w}px;
  background: ${(p) => (p.$on ? "#4b4746" : "transparent")};
  border-left: ${(p) => (p.$on ? "2px solid #3a3635" : "0")};
  border-bottom: 3px solid ${(p) => (p.$on ? "#76b9ed" : "#5d8fb8")};
`;
const Tray = styled.div`
  flex: 1;
  display: flex;
  align-items: center;
`;
const Lang = styled.div`
  width: 50px;
  padding-top: 2px;
  font-size: 17px;
  letter-spacing: -0.6px;
`;
const Clock = styled.div`
  width: 92px;
  padding-top: 2px;
  text-align: center;
  font-size: 17px;
  line-height: 28px;
  letter-spacing: -0.15px;
`;
const ShowDesktop = styled.div`
  width: 8px;
  height: 60px;
  border-left: 1px solid #8b8786;
`;

const TaskBar = () => (
  <Taskbar>
    <Gap $w={24} />
    <Icon w={24} h={60} fill="#fff">
      <path d="M0 41V31h10v11.400zM11 31h13v13l-13-1.700zM0 30V20.500L10 19v11zM11 19L24 17.500V30H11z" transform="translate(0 -.5)" fill="#fff" />
    </Icon>
    <Gap $w={48} />
    <Icon w={25} h={60} stroke="#fff" strokeWidth="1.600">
      <circle cx="15.500" cy="26" r="8" />
      <path d="M10 32L.5 41.500" />
    </Icon>
    <Gap $w={48} />
    <Icon w={32} h={60}>
      <path d="M0 19q0-2 2-2h10l3 3h-4v6H0z" fill="#e0a012" />
      <path d="M0 22h12l3-2h15q2 0 2 2v19q0 1-1 1H1q-1 0-1-1z" fill="#ffd560" />
      <path d="M5 43V33q0-2 2-2h18q2 0 2 2v10h-7v-6h-8v6z" fill="#3c93dc" />
    </Icon>
    <Gap $w={29} />
    <AppButton $w={61} $pad={12.5}>
      <Icon w={34} h={57}>
        <circle cx="17" cy="30" r="17" fill="#fbbc05" />
        <path d="M17 30L2.300 21.500A17 17 0 0 1 31.700 21.500H17z" fill="#e53c30" />
        <path d="M17 30L2.300 21.500A17 17 0 0 0 17 47l8-13z" fill="#2f9c4a" />
        <path d="M17 21.500h14.700A17 17 0 0 1 17 47l7.800-13z" fill="#fbc116" />
        <circle cx="17" cy="30" r="8.300" fill="#fff" />
        <circle cx="17" cy="30" r="6.700" fill="#2f7bf0" />
      </Icon>
    </AppButton>
    <Gap $w={14} />
    <AppButton $w={61} $pad={12.5}>
      <Icon w={34} h={57}>
        <defs>
          <linearGradient id="steam" x1="0" y1="0" x2="0" y2="1">
            <stop offset="0" stopColor="#121a34" />
            <stop offset=".5" stopColor="#12264f" />
            <stop offset="1" stopColor="#1484b8" />
          </linearGradient>
        </defs>
        <circle cx="17" cy="30" r="17" fill="url(#steam)" />
        <path d="M.3 29l13 5.500 6-9.500 8 5.500-9 5.500q-1 5-5.500 5t-6-4.500L1.200 34z" fill="#f1f1f4" />
        <circle cx="22.500" cy="25.500" r="6.500" fill="#f1f1f4" />
        <circle cx="22.500" cy="25.500" r="4" fill="#f1f1f4" stroke="#1b2a4f" strokeWidth="1.500" />
        <path d="M9 37q2 3 4.500 1.500T15 34" stroke="#1b2a4f" strokeWidth="1.300" />
      </Icon>
    </AppButton>
    <Gap $w={14} />
    <AppButton $w={48} $pad={12}>
      <Icon w={36} h={57}>
        <rect x="8" y="14" width="27" height="32" rx="1.500" fill="#2b7cd3" />
        <path d="M8 22v-6.500q0-1.500 1.500-1.500h24q1.500 0 1.500 1.500V22z" fill="#41a5ee" />
        <path d="M8 30h27v8H8z" fill="#185abd" />
        <path d="M8 38h27v6.500q0 1.500-1.500 1.500h-24Q8 46 8 44.500z" fill="#103f91" />
        <rect y="21" width="18" height="18" rx="1.500" fill="#185abd" />
        <path d="M3.500 25l2.500 10 3-9.500 3 9.500 2.500-10" stroke="#fff" strokeWidth="1.800" />
      </Icon>
    </AppButton>
    <Stack $w={13} />
    <Gap $w={8} />
    <AppButton $w={67} $on $pad={18}>
      <Icon w={36} h={57}>
        <rect x="4" y="14" width="19" height="16" rx="1.500" fill="#33c481" />
        <rect x="15" y="25" width="14" height="12" fill="#21a366" />
        <path d="M12 35h23v10q0 1-1 1H13q-1 0-1-1z" fill="#185c37" />
        <rect y="21" width="18" height="18" rx="1.500" fill="#107c41" />
        <path d="M6.200 35V25.500h3q3.500 0 3.500 3t-3.500 3H6.200" stroke="#fff" strokeWidth="2" />
      </Icon>
    </AppButton>
    <Stack $w={6} $on />
    <Gap $w={871} />
    <Tray>
      <Icon w={18} h={60} stroke="#fff" strokeWidth="1.500"><path d="M.6 34.500L9 25.500l8.400 9" /></Icon>
      <Gap $w={27} />
      <Icon w={25} h={60}>
        <path d="M12 41L.8 39V21L23.500 18.500V31" stroke="#fff" strokeWidth="1.400" />
        <path d="M7 29q1-5 6-4.500 2 .3 3 1.500M16 23v3.500h-3.500M16 31q-1 5-6 4-2-.5-2.500-1.500M7 37v-3.500h3.500" stroke="#fff" strokeWidth="1.400" />
        <circle cx="18.500" cy="36.500" r="5.500" fill="#2e78c4" />
      </Icon>
      <Gap $w={23} />
      <Icon w={25} h={60}>
        <path d="M6 25h16.500v11.500H6z" stroke="#fff" strokeWidth="1.300" />
        <path d="M8 27h13v8H8z" fill="#fff" />
        <path d="M23.300 28.500v5" stroke="#fff" strokeWidth="1.500" />
        <path d="M1.500 21v4q0 3 2.500 3t2.500-3v-4M1.500 25h5M4 28v5h3" fill="#2b2827" stroke="#fff" strokeWidth="1.400" />
      </Icon>
      <Gap $w={26} />
      <Icon w={20} h={60} strokeWidth="1.300" stroke="#fff">
        <circle cx="17" cy="38" r="1.800" fill="#fff" stroke="none" />
        <path d="M12 39.500a6.500 6.500 0 0 1 6-6.500M7.500 39.500a10.500 10.500 0 0 1 10.500-10.500" />
        <path d="M3.500 39.500A15 15 0 0 1 18 25M.8 36A18 18 0 0 1 18 21.500" stroke="#ccc" />
      </Icon>
      <Gap $w={26} />
      <Icon w={24} h={60} stroke="#fff" strokeWidth="1.400">
        <path d="M1 26.500h4.500L9.500 22v16.500L5.500 34H1z" />
        <path d="M13 26.500q2.500 3.500 0 7.500M16 24q4 6 0 12.500" />
        <path d="M19 21.500q6 8.500 0 17.500" stroke="#777" />
      </Icon>
      <Gap $w={31} />
      <Icon w={22} h={60} stroke="#fff" strokeWidth="1.500">
        <path d="M8 34L13.500 22q2-2.500 3.500 0 .5 1 0 2.500L11.500 35l-3.500 2zM8 30q-7 2-6.500 6.500t5.500 2.500M16 28q4-1 4.500 1.500-.5 2-3 2" />
      </Icon>
      <Gap $w={29} />
      <Lang>РУС</Lang>
      <Clock>13:12<br />13.04.2022</Clock>
      <Gap $w={26} />
      <Icon w={40} h={60}>
        <path d="M0 18h24v21H14l-3 4-4-4H0z" fill="#fff" />
        <path d="M5 24h14M5 28.500h14M5 33h9" stroke="#3a3635" strokeWidth="1.300" />
        <circle cx="23" cy="41" r="12" fill="#3b3837" stroke="#b5b3b2" strokeWidth="1.300" />
        <text x="23" y="47" textAnchor="middle" fill="#fff" fontSize="16" fontWeight="600">2</text>
      </Icon>
      <Fill />
      <ShowDesktop />
    </Tray>
  </Taskbar>
);

export default function App() {
  return (
    <Screen>
      <Global />
      <Top />
      <Ribbon />
      <Entry>
        <EntryButtons>
          <Icon w={12} h={12} stroke="#d9453d" strokeWidth="2"><path d="M1.500 1.500L11 11M10 1L1.500 11" /></Icon>
          <Icon w={14} h={13} stroke="#2f7fb8" strokeWidth="2.600"><path d="M1 6.500l4 4.500L13 1.500" /></Icon>
        </EntryButtons>
        <EntryField><EntryInput /></EntryField>
      </Entry>
      <Timeline />
      <Splitter />
      <Workspace>
        <Side $color={GREEN} $ls={-0.5}><Turned>ДИАГРАММА ГАНТА</Turned></Side>
        <Sheet />
        <PaneSplit />
        <Gantt />
        <ScrollColumn>
          <ScrollTrack $v>
            <Arrow dir="up" />
            <Gap $h={22} />
            <Thumb $w={25} $h={214} />
            <Fill />
            <Arrow dir="down" />
          </ScrollTrack>
        </ScrollColumn>
      </Workspace>
      <StatusBar />
      <TaskBar />
    </Screen>
  );
}
